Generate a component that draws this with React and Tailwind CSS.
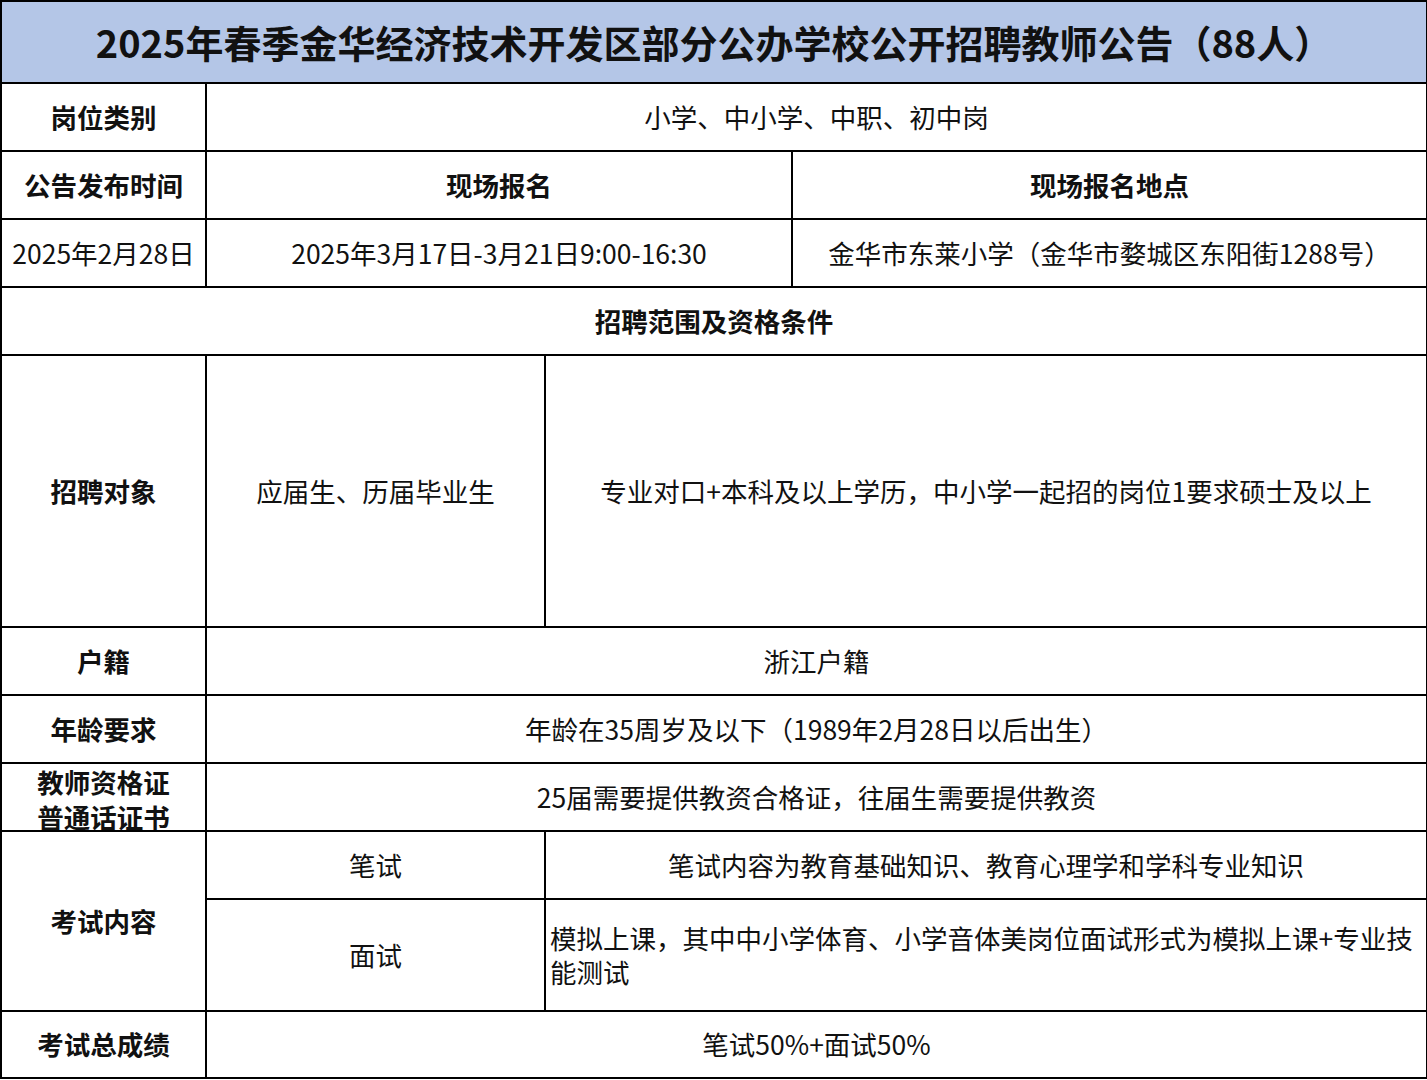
const cell = 'border-2 border-black text-center align-middle pb-[1px]';
const label = `${cell} font-bold`;

export default function App() {
  return (
    <div className="bg-white text-[26.5px] text-[#111] [font-family:'Noto_Sans_CJK_SC','Noto_Sans',sans-serif]">
      <table className="table-fixed border-collapse w-[1426px]">
        <colgroup>
          <col className="w-[205px]" />
          <col className="w-[339px]" />
          <col className="w-[247px]" />
          <col className="w-[635px]" />
        </colgroup>
        <tbody>
          <tr className="h-[82px]">
            <td colSpan={4} className={`${cell} bg-[#b4c6e7] text-[38px] font-bold`}>
              2025年春季金华经济技术开发区部分公办学校公开招聘教师公告（88人）
            </td>
          </tr>
          <tr className="h-[68px]">
            <td className={label}>岗位类别</td>
            <td colSpan={3} className={cell}>小学、中小学、中职、初中岗</td>
          </tr>
          <tr className="h-[68px]">
            <td className={label}>公告发布时间</td>
            <td colSpan={2} className={label}>现场报名</td>
            <td className={label}>现场报名地点</td>
          </tr>
          <tr className="h-[68px]">
            <td className={cell}>2025年2月28日</td>
            <td colSpan={2} className={cell}>2025年3月17日-3月21日9:00-16:30</td>
            <td className={cell}>金华市东莱小学（金华市婺城区东阳街1288号）</td>
          </tr>
          <tr className="h-[68px]">
            <td colSpan={4} className={label}>招聘范围及资格条件</td>
          </tr>
          <tr className="h-[272px]">
            <td className={label}>招聘对象</td>
            <td className={cell}>应届生、历届毕业生</td>
            <td colSpan={2} className={cell}>专业对口+本科及以上学历，中小学一起招的岗位1要求硕士及以上</td>
          </tr>
          <tr className="h-[68px]">
            <td className={label}>户籍</td>
            <td colSpan={3} className={cell}>浙江户籍</td>
          </tr>
          <tr className="h-[68px]">
            <td className={label}>年龄要求</td>
            <td colSpan={3} className={cell}>年龄在35周岁及以下（1989年2月28日以后出生）</td>
          </tr>
          <tr className="h-[68px]">
            <td className="border-2 border-black text-center align-middle font-bold p-0">
              <div className="h-[66px] overflow-hidden flex flex-col justify-center leading-[35px] pt-[3px]">
                <span>教师资格证</span>
                <span>普通话证书</span>
              </div>
            </td>
            <td colSpan={3} className={cell}>25届需要提供教资合格证，往届生需要提供教资</td>
          </tr>
          <tr className="h-[68px]">
            <td rowSpan={2} className={label}>考试内容</td>
            <td className={cell}>笔试</td>
            <td colSpan={2} className={cell}>笔试内容为教育基础知识、教育心理学和学科专业知识</td>
          </tr>
          <tr className="h-[112px]">
            <td className={cell}>面试</td>
            <td colSpan={2} className="border-2 border-black text-left align-middle pl-[4px] pb-[1px] leading-[34px]">
              模拟上课，其中中小学体育、小学音体美岗位面试形式为模拟上课+专业技
              <br />
              能测试
            </td>
          </tr>
          <tr className="h-[67px]">
            <td className={label}>考试总成绩</td>
            <td colSpan={3} className={cell}>笔试50%+面试50%</td>
          </tr>
        </tbody>
      </table>
    </div>
  );
}
